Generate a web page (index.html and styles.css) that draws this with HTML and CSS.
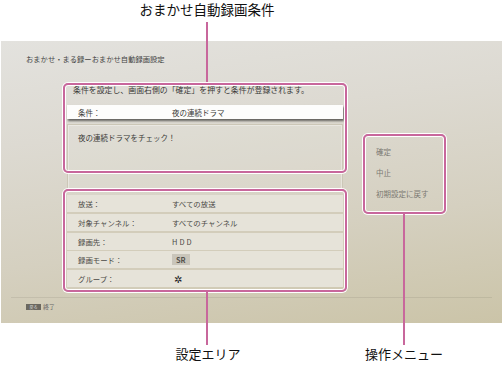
FILE: index.html
```html
<!DOCTYPE html>
<html lang="ja">
<head>
    <meta charset="UTF-8">
    <meta name="viewport" content="width=device-width, initial-scale=1.0">
    <title>おまかせ自動録画設定</title>
    <link rel="stylesheet" href="styles.css">
</head>
<body>
    <div class="figure">
        <div class="screen">
            <div class="breadcrumb">おまかせ・まる録ーおまかせ自動録画設定</div>
            <div class="main">
                <div class="left">
                    <div class="guide">条件を設定し、画面右側の「確定」を押すと条件が登録されます。</div>
                    <div class="cond-row">
                        <span class="label">条件：</span>
                        <span class="value">夜の連続ドラマ</span>
                    </div>
                    <div class="memo">夜の連続ドラマをチェック！</div>
                    <div class="settings">
                        <div class="row"><span class="label">放送：</span><span class="value">すべての放送</span></div>
                        <div class="row"><span class="label">対象チャンネル：</span><span class="value">すべてのチャンネル</span></div>
                        <div class="row"><span class="label">録画先：</span><span class="value wide">HDD</span></div>
                        <div class="row"><span class="label">録画モード：</span><span class="value"><span class="chip">SR</span></span></div>
                        <div class="row"><span class="label">グループ：</span><span class="value mark">✲</span></div>
                    </div>
                </div>
                <div class="menu">
                    <div class="menu-item">確定</div>
                    <div class="menu-item">中止</div>
                    <div class="menu-item">初期設定に戻す</div>
                </div>
            </div>
            <div class="footer">
                <span class="key">戻る</span>
                <span class="key-label">終了</span>
            </div>
        </div>

        <!-- annotations -->
        <div class="note note-top">おまかせ自動録画条件</div>
        <div class="lead lead-top"></div>
        <div class="callout callout-cond"></div>
        <div class="callout callout-settings"></div>
        <div class="callout callout-menu"></div>
        <div class="lead lead-settings"></div>
        <div class="lead lead-menu"></div>
        <div class="note note-settings">設定エリア</div>
        <div class="note note-menu">操作メニュー</div>
    </div>
</body>
</html>
```

FILE: styles.css
```css
body {
    margin: 0;
    background: #fff;
    font-family: "Noto Sans CJK JP", "Noto Sans", sans-serif;
}
.figure {
    position: relative;
    width: 504px;
    height: 366px;
    padding-top: 41px;
    box-sizing: border-box;
}
.screen {
    margin-left: 1px;
    width: 501px;
    height: 282px;
    display: flex;
    flex-direction: column;
    background: linear-gradient(172deg, #e3e2de 0%, #dddad2 30%, #d5d0c0 65%, #cbc4a8 100%);
    color: #3a3a38;
}
.breadcrumb {
    height: 36px;
    line-height: 36px;
    padding-left: 25px;
    font-size: 7.3px;
    color: #444;
}
.main {
    flex: 1;
    display: flex;
    padding-left: 66px;
}
.left {
    width: 276px;
}
.guide {
    margin-top: 8px;
    height: 10px;
    line-height: 10px;
    padding-left: 6px;
    font-size: 7.9px;
}
.cond-row {
    margin-top: 10px;
    height: 14px;
    display: flex;
    align-items: center;
    background: #fdfdfc;
    box-shadow: 1px 2px 2px rgba(0, 0, 0, 0.55);
    font-size: 7.5px;
}
.label {
    width: 105px;
    padding-left: 11px;
    box-sizing: border-box;
}
.memo {
    margin-top: 5px;
    height: 66px;
    box-sizing: border-box;
    padding: 8px 10px;
    line-height: 10px;
    font-size: 7.5px;
    border: 1px solid #ccc7b7;
    box-shadow: inset 0 0 0 1px rgba(255, 255, 255, 0.35);
    background: rgba(255, 255, 255, 0.08);
}
.settings {
    margin-top: 5px;
    display: flex;
    flex-direction: column;
    gap: 1.75px;
    background: #d3cdbb;
}
.row {
    height: 17px;
    display: flex;
    align-items: center;
    background: #e6e3d9;
    font-size: 7.4px;
    color: #4a4945;
}
.value.wide {
    letter-spacing: 2px;
}
.chip {
    display: inline-block;
    padding: 0 4px;
    line-height: 11px;
    background: #c9c5ba;
    font-weight: bold;
    color: #55534d;
}
.mark {
    font-size: 10px;
    color: #222;
    padding-left: 2px;
}
.menu {
    margin-left: 33px;
    padding-top: 64px;
}
.menu-item {
    height: 21px;
    line-height: 21px;
    font-size: 7.5px;
    color: #7b7972;
}
.footer {
    height: 26px;
    margin: 0 10px;
    border-top: 1px solid rgba(0, 0, 0, 0.07);
    box-sizing: border-box;
    display: flex;
    align-items: center;
    gap: 2px;
    padding-left: 15px;
    padding-bottom: 8px;
}
.key {
    width: 15px;
    height: 6px;
    line-height: 6px;
    background: #6b6860;
    color: #ddd;
    font-size: 4px;
    text-align: center;
}
.key-label {
    font-size: 6px;
    color: #666;
}

/* annotation overlay */
.note {
    position: absolute;
    font-size: 13.5px;
    line-height: 18px;
    color: #111;
    transform: translateX(-50%);
    white-space: nowrap;
}
.note-top {
    left: 207px;
    top: 0;
}
.note-settings {
    left: 208px;
    top: 345px;
    font-size: 13px;
}
.note-menu {
    left: 404px;
    top: 345px;
    font-size: 13px;
}
.lead {
    position: absolute;
    width: 2px;
    background: #c8679c;
}
.lead-top {
    left: 206px;
    top: 22px;
    height: 61px;
}
.lead-settings {
    left: 206px;
    top: 292px;
    height: 53px;
}
.lead-menu {
    left: 403px;
    top: 214px;
    height: 131px;
}
.callout {
    position: absolute;
    box-sizing: border-box;
    border: 2px solid #c8679c;
    border-radius: 5px;
    box-shadow: 0 0 0 1px #fff, inset 0 0 0 1px #fff;
}
.callout-cond {
    left: 63px;
    top: 83px;
    width: 284px;
    height: 90px;
}
.callout-settings {
    left: 63px;
    top: 189px;
    width: 284px;
    height: 103px;
}
.callout-menu {
    left: 363px;
    top: 134px;
    width: 83px;
    height: 80px;
}
```
